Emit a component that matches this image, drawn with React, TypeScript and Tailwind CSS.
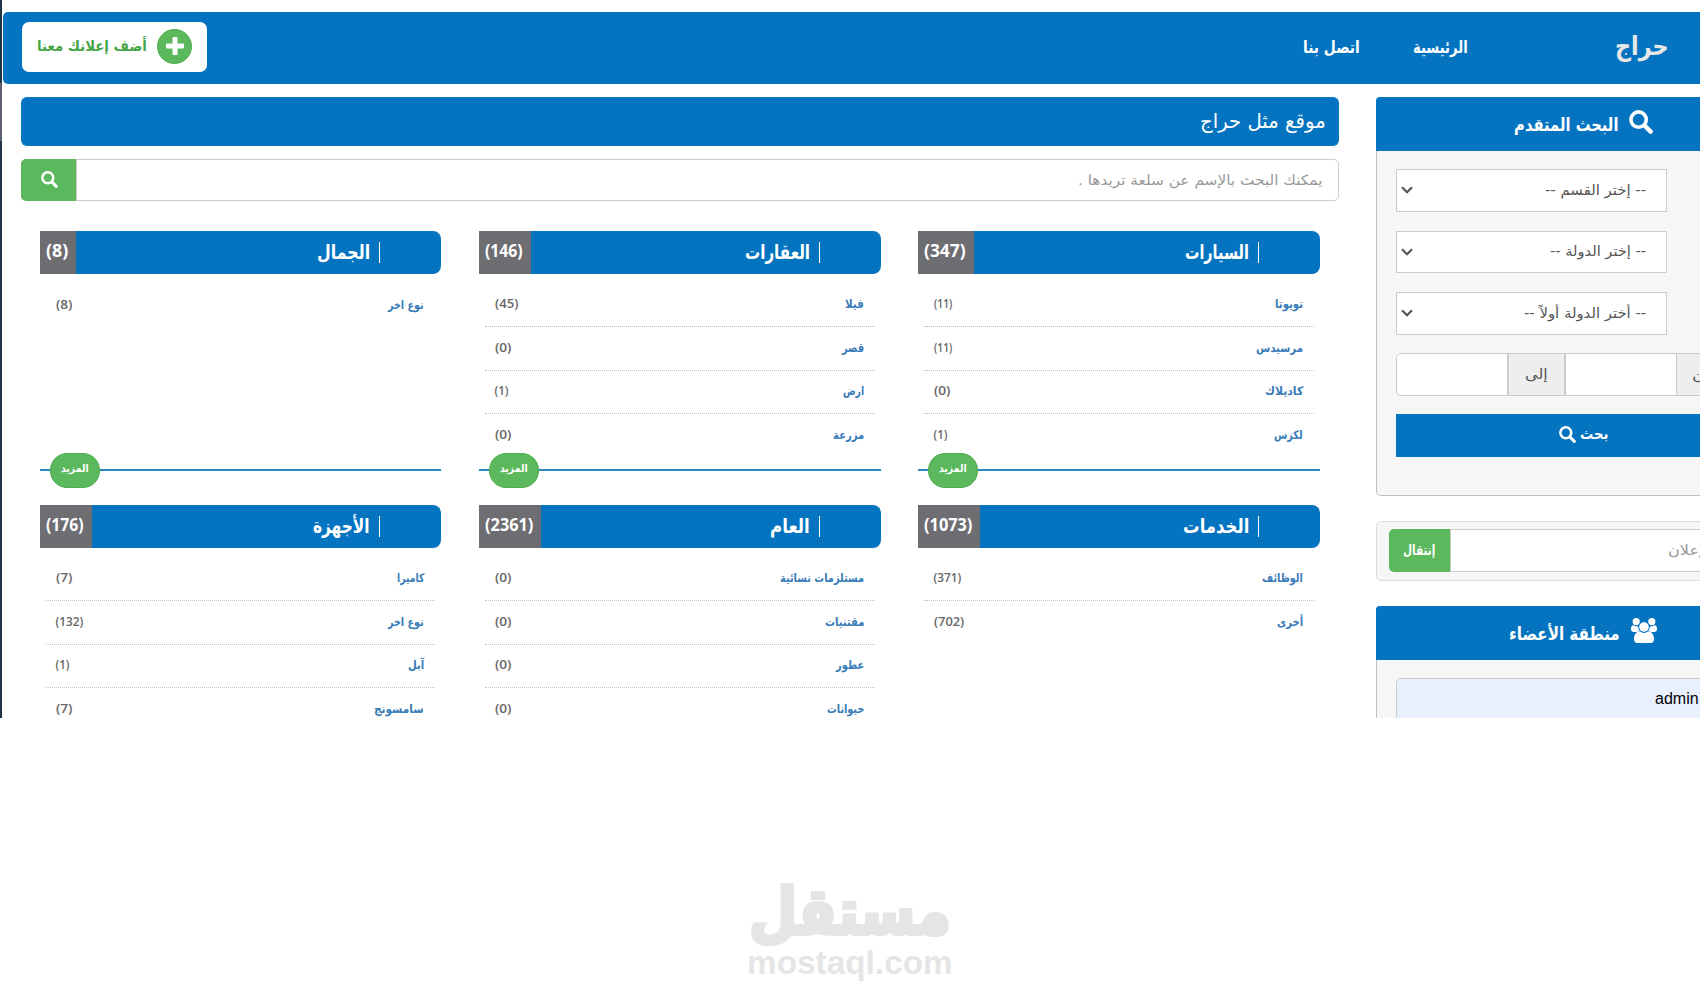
import { useLayoutEffect, useRef, useState } from "react";

/* Right-to-left label whose glyphs are condensed or widened to a given width. */
function Label({ w, className = "", children }: { w: number; className?: string; children: string }) {
  const ref = useRef<HTMLSpanElement>(null);
  const [scale, setScale] = useState(1);
  useLayoutEffect(() => {
    if (ref.current) setScale(w / ref.current.offsetWidth);
  }, [w]);
  return (
    <span className={`flex shrink-0 justify-end ${className}`} style={{ width: w }}>
      <span
        ref={ref}
        dir="auto"
        className="shrink-0 origin-right whitespace-nowrap"
        style={{ transform: `scaleX(${scale})` }}
      >
        {children}
      </span>
    </span>
  );
}

function SearchIcon({ className }: { className: string }) {
  return (
    <svg viewBox="0 0 24 24" fill="none" stroke="currentColor" className={`shrink-0 ${className}`}>
      <circle cx="9.6" cy="9.6" r="7.7" strokeWidth="3.6" />
      <path d="M15.5 15.5 21.6 21.6" strokeWidth="4.4" strokeLinecap="round" />
    </svg>
  );
}

function UsersIcon() {
  return (
    <svg viewBox="0 0 26 25" fill="currentColor" className="mb-0.5 h-[25px] w-[26px] shrink-0">
      <circle cx="5.2" cy="3.6" r="3.6" />
      <circle cx="20.8" cy="3.6" r="3.6" />
      <path d="M2.200 7.300C.5 7.300 0 9 0 11.200c0 1.900 1 2.700 2.800 2.700h3.400c1-.6 2-.9 2.500-1-.9-1.200-1.300-2.700-1.200-4.400Q5 8.700 2.200 7.300Z" />
      <path d="M23.800 7.300c1.700 0 2.200 1.700 2.200 3.900 0 1.900-1 2.700-2.800 2.700h-3.400c-1-.6-2-.9-2.500-1 .9-1.200 1.300-2.700 1.200-4.400q2.500.2 5.300-1.200Z" />
      <circle cx="13" cy="9" r="5" />
      <path d="M8.800 13.300c1 .9 2.500 1.500 4.200 1.500s3.200-.6 4.200-1.500c3.700.3 5.800 3.400 5.800 8 0 2.400-1.300 3.700-3.400 3.700H6.400C4.300 25 3 23.700 3 21.300c0-4.600 2.100-7.700 5.800-8Z" />
      <circle cx="13" cy="9" r="5.300" fill="none" stroke="#0473c0" strokeWidth=".7" />
    </svg>
  );
}

function Chevron() {
  return (
    <svg viewBox="0 0 12 8" fill="none" stroke="#55555c" strokeWidth="2.2" className="h-2 w-3 shrink-0">
      <path d="M1 1.200 6 6.200 11 1.200" />
    </svg>
  );
}

type Item = [name: string, width: number, count: number];
type Category = { title: string; w: number; total: number; totalW: number; items: Item[] };

const topRow: Category[] = [
  { title: "الجمال", w: 53, total: 8, totalW: 22, items: [["نوع اخر", 36, 8]] },
  {
    title: "العقارات", w: 65, total: 146, totalW: 38,
    items: [["فيلا", 19, 45], ["قصر", 22, 0], ["ارض", 21, 1], ["مزرعة", 31, 0]],
  },
  {
    title: "السيارات", w: 64, total: 347, totalW: 42,
    items: [["تويوتا", 28, 11], ["مرسيدس", 47, 11], ["كاديلاك", 38, 0], ["لكزس", 29, 1]],
  },
];

const bottomRow: Category[] = [
  {
    title: "الأجهزة", w: 57, total: 176, totalW: 38,
    items: [["كاميرا", 27, 7], ["نوع اخر", 36, 132], ["آبل", 16, 1], ["سامسونج", 50, 7]],
  },
  {
    title: "العام", w: 40, total: 2361, totalW: 48,
    items: [["مستلزمات نسائية", 84, 0], ["مقتنيات", 39, 0], ["عطور", 28, 0], ["حيوانات", 37, 0]],
  },
  {
    title: "الخدمات", w: 66, total: 1073, totalW: 48,
    items: [["الوظائف", 41, 371], ["أخرى", 26, 702]],
  },
];

/* The digit 1 is set narrower than the others. */
function countWidth(n: number) {
  return [...String(n)].reduce((sum, d) => sum + (d === "1" ? 4.5 : 7), 9);
}

function CategoryCard({ c, more = false }: { c: Category; more?: boolean }) {
  return (
    <section className="min-w-0 nth-[3n+1]:mr-px">
      <header className="flex h-[43px] items-stretch overflow-hidden rounded-r-lg bg-[#0473c0] text-white">
        <div className="flex items-center bg-[#6e6d72] pr-2 pb-1 pl-1.5 font-['Open_Sans',sans-serif] text-[17px] font-bold">
          <Label w={c.totalW}>{`(${c.total})`}</Label>
        </div>
        <div className="flex flex-1 items-center justify-end gap-[9px] pr-[61px]">
          <Label w={c.w} className="pb-0.5 text-[20px] font-bold">{c.title}</Label>
          <span className="h-[21px] w-px bg-white" />
        </div>
      </header>
      <ul className="h-[195px] px-1.5 pt-[9.500px]">
        {c.items.map(([name, w, count], i) => (
          <li
            key={name}
            className={`flex h-[43.500px] items-center justify-between pr-[11px] pb-px pl-2.5 ${
              i < c.items.length - 1 ? "border-b border-dotted border-[#bfbfbf]" : ""
            }`}
          >
            <Label w={countWidth(count)} className="font-['Open_Sans',sans-serif] text-[12px] font-semibold text-[#666]">
              {`(${count})`}
            </Label>
            <Label w={w} className="text-[12px] font-bold text-[#377bb8]">{name}</Label>
          </li>
        ))}
      </ul>
      {more && (
        <div className="-mt-4 mb-[17px] flex h-[35px] items-center">
          <span className="mb-px h-0.5 w-2.5 bg-[#2b88be]" />
          <button className="flex h-[35px] w-[50px] items-center justify-center rounded-[17px] border border-[#4cae4c] bg-[#5cb85c] pb-0.5 text-[11px] font-bold text-white">
            <Label w={28}>المزيد</Label>
          </button>
          <span className="mb-px h-0.5 flex-1 bg-[#2b88be]" />
        </div>
      )}
    </section>
  );
}

function SelectBox({ w, children }: { w: number; children: string }) {
  return (
    <div className="flex h-[42.500px] w-[271px] items-center justify-between border border-[#ccc] bg-white pr-5 pl-1 text-[14px] text-[#555]">
      <Chevron />
      <Label w={w}>{children}</Label>
    </div>
  );
}

function PanelHeader({ w, icon, children }: { w: number; icon: React.ReactNode; children: string }) {
  return (
    <header className="flex h-[54px] items-center gap-[11px] pb-1 text-white">
      <Label w={w} className="pt-1 text-[18px] font-bold">{children}</Label>
      {icon}
    </header>
  );
}

function Sidebar() {
  return (
    <aside className="w-[415px] shrink-0">
      <section className="h-[399px] rounded-l-[5px] border-b border-l border-[#bfbfbf] bg-[#f6f6f6]">
        <div className="-ml-px rounded-tl bg-[#0473c0] pl-[138px]">
          <PanelHeader w={104} icon={<SearchIcon className="size-6" />}>البحث المتقدم</PanelHeader>
        </div>
        <div className="flex flex-col gap-[19px] pt-[18px] pr-5 pl-[19px]">
          <SelectBox w={101}>-- إختر القسم --</SelectBox>
          <SelectBox w={96}>-- إختر الدولة --</SelectBox>
          <SelectBox w={122}>-- أختر الدولة أولاً --</SelectBox>
          <div className="-mt-px flex h-[43px] overflow-hidden rounded-[5px] border border-[#ccc] bg-white text-[14px] text-[#555]">
            <span className="w-[110px]" />
            <span className="flex w-[59px] items-center justify-center border-x-2 border-[#ccc] bg-[#eee]">
              <Label w={23}>إلى</Label>
            </span>
            <span className="w-[110px]" />
            <span className="flex flex-1 items-center border-l border-[#ccc] bg-[#eee] pl-[15px]">
              <Label w={23}>من</Label>
            </span>
          </div>
          <button className="-mt-px flex h-[43px] items-center justify-center gap-1 bg-[#0473c0] pb-0.5 text-[15px] font-bold text-white">
            <SearchIcon className="size-[17px]" />
            <Label w={28}>بحث</Label>
          </button>
        </div>
      </section>

      <section className="mt-[25px] flex h-[60px] rounded-[5px] border border-[#ddd] bg-[#f6f6f6] px-3 pt-[7px]">
        <button className="flex h-[43px] w-[61px] items-center justify-center rounded-l-[5px] bg-[#5cb85c] pb-px text-[14px] font-bold text-white">
          <Label w={32}>إنتقال</Label>
        </button>
        <div className="flex h-[43px] flex-1 items-center justify-end border border-[#ccc] bg-white pr-[33px] text-[14px] text-[#999]">
          <Label w={76}>رقم الإعلان</Label>
        </div>
      </section>

      <section className="mt-[25px] h-[180px] rounded-tl border-l border-[#bfbfbf] bg-[#f6f6f6]">
        <div className="-ml-px rounded-tl bg-[#0473c0] pl-[133px]">
          <PanelHeader w={111} icon={<UsersIcon />}>منطقة الأعضاء</PanelHeader>
        </div>
        <div className="mt-[18px] ml-[19px] h-[43px] rounded-[5px] border border-[#ccc] bg-[#e8f0fe] pt-2 pl-[258px] font-['Liberation_Sans',sans-serif] text-[16px] leading-6 text-black">
          admin
        </div>
      </section>
    </aside>
  );
}

function TopBar() {
  return (
    <nav className="flex h-[72px] w-[1800px] items-center rounded-l-[5px] bg-[#0473c0] pl-[19px] text-white">
      <button className="mt-2.5 flex h-[50px] w-[185px] items-center gap-2.5 self-start rounded-[7px] bg-white pb-0.5 pl-[15px] text-[#46a546]">
        <Label w={110} className="text-[15px] font-bold">أضف إعلانك معنا</Label>
        <span className="flex size-[35px] items-center justify-center rounded-full border border-[#4cae4c] bg-[#5cb85c]">
          <svg viewBox="0 0 18 18" className="size-[18px] fill-white">
            <path d="M6.500 1q0-1 1-1h3q1 0 1 1v5.500H17q1 0 1 1v3q0 1-1 1h-5.500V17q0 1-1 1h-3q-1 0-1-1v-5.500H1q-1 0-1-1v-3q0-1 1-1h5.500Z" />
          </svg>
        </span>
      </button>
      <div className="ml-[1096px] flex items-center text-[17px] font-bold">
        <Label w={57}>اتصل بنا</Label>
        <Label w={55} className="ml-[53px]">الرئيسية</Label>
        <Label w={54} className="ml-[147px] pb-1 text-[26px] text-[#e7e7e7]">حراج</Label>
      </div>
    </nav>
  );
}

function Main() {
  return (
    <main className="w-[1318px] shrink-0">
      <h1 className="flex h-[49px] items-center justify-end rounded-md bg-[#0473c0] pr-[13px] pb-0.5 text-[20px] text-white">
        <Label w={126}>موقع مثل حراج</Label>
      </h1>
      <div className="mt-[13px] flex h-[42px]">
        <button className="flex w-[55px] items-center justify-center rounded-l-[5px] bg-[#5cb85c] pb-0.5 pl-0.5 text-white">
          <SearchIcon className="size-[17px]" />
        </button>
        <div className="flex flex-1 items-center justify-end rounded-r-[5px] border border-[#ccc] bg-white pr-4 text-[14px] text-[#999]">
          <Label w={244}>يمكنك البحث بالإسم عن سلعة تريدها .</Label>
        </div>
      </div>
      <div className="mt-[30px] grid grid-cols-[402px_402px_402px] gap-x-[37px] pl-[19px]">
        {topRow.map((c) => <CategoryCard key={c.title} c={c} more />)}
        {bottomRow.map((c) => <CategoryCard key={c.title} c={c} />)}
      </div>
    </main>
  );
}

export default function App() {
  return (
    <div className="flex h-[1000px] w-[1700px] flex-col overflow-hidden bg-white font-['DejaVu_Sans',sans-serif]">
      <div className="flex h-[718px] shrink-0 overflow-hidden">
        <div className="mr-px flex w-0.5 shrink-0 flex-col bg-[#1f3547]">
          <span className="mt-[83px] h-[58px] bg-[#5b5f70]" />
        </div>
        <div className="shrink-0 pt-3">
          <TopBar />
          <div className="mt-[13px] flex gap-[37px] pl-[18px]">
            <Main />
            <Sidebar />
          </div>
        </div>
      </div>
      <footer className="flex flex-col items-center pt-[163px] font-bold text-[#e5e5e5]">
        <Label w={202} className="text-[64px] leading-[63px] [-webkit-text-stroke:4px_#e5e5e5]">مستقل</Label>
        <Label w={206} className="font-['Liberation_Sans',sans-serif] text-[34px] leading-9">mostaql.com</Label>
      </footer>
    </div>
  );
}
